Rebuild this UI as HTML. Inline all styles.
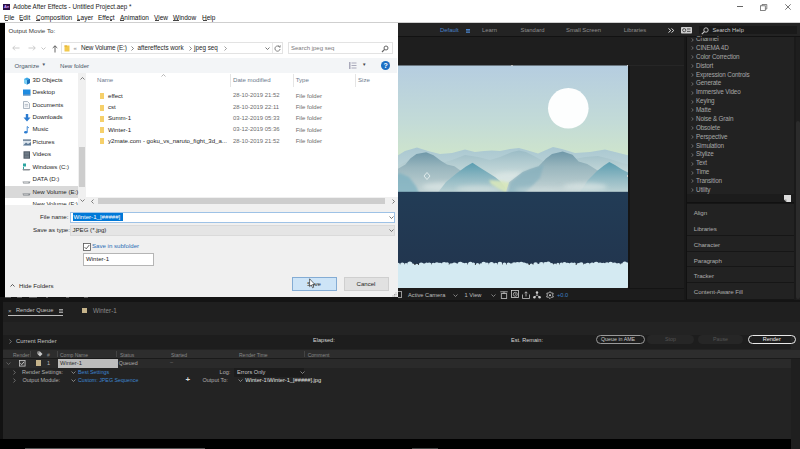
<!DOCTYPE html>
<html><head><meta charset="utf-8">
<style>
*{margin:0;padding:0;box-sizing:border-box}
html,body{width:800px;height:449px;overflow:hidden;background:#1e1e1e;font-family:"Liberation Sans",sans-serif}
.a{position:absolute}
.t{position:absolute;white-space:nowrap;line-height:1}
</style></head><body>
<!-- ===== Title + menu ===== -->
<div class="a" style="left:0;top:0;width:800px;height:23px;background:#fff"></div>
<div class="a" style="left:0;top:22px;width:800px;height:1px;background:#cfcfcf"></div>
<div class="a" style="left:3px;top:4px;width:7px;height:6px;background:#2a0f45"></div>
<div class="t" style="left:4px;top:5px;font-size:4px;color:#d3a0ff;font-weight:bold">Ae</div>
<div class="t" style="left:13px;top:4px;font-size:6.3px;color:#222">Adobe After Effects - Untitled Project.aep *</div>
<div class="t" style="left:4px;top:15.3px;font-size:6.5px;color:#111">
<span class="a" style="left:0">File</span><span class="a" style="left:15px">Edit</span><span class="a" style="left:32px">Composition</span><span class="a" style="left:73px">Layer</span><span class="a" style="left:94px">Effect</span><span class="a" style="left:116px">Animation</span><span class="a" style="left:150px">View</span><span class="a" style="left:169px">Window</span><span class="a" style="left:198px">Help</span>
</div>
<div class="a" style="left:4.5px;top:20.2px;width:3px;height:0.7px;background:#444"></div><div class="a" style="left:19.8px;top:20.2px;width:3.5px;height:0.7px;background:#444"></div><div class="a" style="left:36.2px;top:20.2px;width:4px;height:0.7px;background:#444"></div><div class="a" style="left:77.2px;top:20.2px;width:3.2px;height:0.7px;background:#444"></div><div class="a" style="left:110px;top:20.2px;width:2px;height:0.7px;background:#444"></div><div class="a" style="left:120px;top:20.2px;width:4px;height:0.7px;background:#444"></div><div class="a" style="left:154.6px;top:20.2px;width:4px;height:0.7px;background:#444"></div><div class="a" style="left:173.2px;top:20.2px;width:6px;height:0.7px;background:#444"></div><div class="a" style="left:202.6px;top:20.2px;width:4px;height:0.7px;background:#444"></div>
<!-- window controls -->
<div class="a" style="left:737px;top:6px;width:5.5px;height:1px;background:#666"></div>
<svg class="a" style="left:760px;top:3.5px" width="8" height="7" viewBox="0 0 8 7"><rect x="0.5" y="1.8" width="4.8" height="4.7" fill="none" stroke="#666" stroke-width="0.8"/><path d="M2,1.8 L2,0.5 L6.8,0.5 L6.8,5 L5.3,5" fill="none" stroke="#666" stroke-width="0.8"/></svg>
<svg class="a" style="left:785px;top:3.8px" width="6" height="6" viewBox="0 0 6 6"><path d="M0.3,0.3 L5.7,5.7 M5.7,0.3 L0.3,5.7" stroke="#555" stroke-width="0.8"/></svg>
<!-- dialog bottom blips -->
<!-- ===== AE workspace bar ===== -->
<div class="a" style="left:398px;top:23px;width:402px;height:13px;background:#232323"></div>
<div class="a" style="left:398px;top:36px;width:402px;height:1px;background:#121212"></div>
<div class="t" style="left:440px;top:27.7px;font-size:5.9px;color:#4a82c8">Default</div>
<div class="a" style="left:466px;top:28.6px;width:3.5px;height:0.8px;background:#4a82c8;box-shadow:0 1.4px 0 #4a82c8,0 2.8px 0 #4a82c8"></div>
<div class="t" style="left:482px;top:27.5px;font-size:5.9px;color:#8e8e8e">Learn</div>
<div class="t" style="left:520.5px;top:27.5px;font-size:5.9px;color:#8e8e8e">Standard</div>
<div class="t" style="left:566px;top:27.5px;font-size:5.9px;color:#8e8e8e">Small Screen</div>
<div class="t" style="left:623.7px;top:27.5px;font-size:5.9px;color:#8e8e8e">Libraries</div>
<svg class="a" style="left:668px;top:27.5px" width="7" height="5" viewBox="0 0 7 5"><path d="M0.5,0.5 L2.8,2.5 L0.5,4.5 M3.5,0.5 L5.8,2.5 L3.5,4.5" fill="none" stroke="#d8d8d8" stroke-width="1"/></svg>
<svg class="a" style="left:681px;top:27px" width="11" height="6.5" viewBox="0 0 11 6.5"><rect x="0" y="0" width="11" height="6.5" rx="0.8" fill="#cfcfcf"/><circle cx="3.2" cy="3.2" r="1.6" fill="none" stroke="#333" stroke-width="0.8"/><rect x="6" y="1.6" width="3.5" height="0.8" fill="#333"/><rect x="6" y="3.9" width="3.5" height="0.8" fill="#333"/></svg>
<div class="a" style="left:698.5px;top:26px;width:98.5px;height:8px;background:#1a1a1a"></div>
<svg class="a" style="left:700.5px;top:26.5px" width="8" height="8" viewBox="0 0 8 8"><circle cx="5" cy="3" r="2.2" fill="none" stroke="#cfcfcf" stroke-width="0.9"/><line x1="3.4" y1="4.6" x2="0.8" y2="7.2" stroke="#cfcfcf" stroke-width="1.1"/></svg>
<div class="t" style="left:712.5px;top:27.5px;font-size:5.7px;color:#c8c8c8">Search Help</div>

<!-- ===== Comp panel ===== -->
<div class="a" style="left:398px;top:37px;width:288px;height:263px;background:#1e1e1e"></div>
<svg class="a" style="left:398px;top:65px" width="230" height="223" viewBox="398 65 230 223">
<defs>
<linearGradient id="sky" x1="0" y1="0" x2="0" y2="1"><stop offset="0" stop-color="#b5cde0"/><stop offset="0.45" stop-color="#c3dbd7"/><stop offset="0.78" stop-color="#d1e7c9"/><stop offset="1" stop-color="#d7ebc3"/></linearGradient>
<linearGradient id="la" x1="0" y1="0" x2="0" y2="1"><stop offset="0" stop-color="#a9c7d1"/><stop offset="1" stop-color="#d3e3de"/></linearGradient>
<linearGradient id="lb" x1="0" y1="0" x2="0" y2="1"><stop offset="0" stop-color="#9bbcc6"/><stop offset="0.55" stop-color="#c9dbdb"/><stop offset="1" stop-color="#dae6e3"/></linearGradient>
<linearGradient id="lc" x1="0" y1="0" x2="0" y2="1"><stop offset="0" stop-color="#6f98a8"/><stop offset="0.35" stop-color="#99b6be"/><stop offset="0.75" stop-color="#b6cacd"/><stop offset="1" stop-color="#c5d5d6"/></linearGradient>
<linearGradient id="ld" x1="0" y1="0" x2="0" y2="1"><stop offset="0" stop-color="#5b9db0"/><stop offset="0.5" stop-color="#92bac4"/><stop offset="1" stop-color="#c2d5d6"/></linearGradient>
<linearGradient id="wt" x1="0" y1="0" x2="0" y2="1"><stop offset="0" stop-color="#223c56"/><stop offset="1" stop-color="#22364f"/></linearGradient>
<filter id="bl" x="-5%" y="-5%" width="110%" height="110%"><feGaussianBlur stdDeviation="0.55"/></filter>
<filter id="bm" x="-30%" y="-80%" width="160%" height="260%"><feGaussianBlur stdDeviation="2.2"/></filter>
<filter id="bs" x="-20%" y="-20%" width="140%" height="140%"><feGaussianBlur stdDeviation="1.2"/></filter>
<clipPath id="cl"><rect x="398" y="65.5" width="230" height="126.5"/></clipPath>
</defs>
<rect x="398" y="65.5" width="230" height="127" fill="url(#sky)"/>
<circle cx="568.3" cy="108.3" r="20.3" fill="#fdfefe"/>
<g clip-path="url(#cl)"><g filter="url(#bl)">
<path d="M390,160 L405,151 L417,147.5 L428,151 L440,154 L452,153 L465,149.5 L475,152 L484,151 L492,150.5 L500,151 L510,149 L519,148 L528,150.5 L538,153.5 L546,150 L553,147 L562,149 L575,153 L590,152 L605,149.5 L615,152 L635,157 L635,195 L390,195 Z" fill="url(#la)"/>
<path d="M390,172 L400,165 L410,160 L420,158 L430,160 L442,163 L452,160 L465,155 L478,157 L490,160 L500,157 L512,152 L519,150.5 L526,152 L534,156 L545,162 L556,166 L570,160 L585,157 L598,156 L610,159 L622,163 L635,166 L635,195 L390,195 Z" fill="url(#lb)"/>
<ellipse cx="512" cy="180" rx="22" ry="8" fill="#dce7e5" opacity="0.8" filter="url(#bm)"/>
<path d="M390,170 L398,168.8 L405.4,164.5 L410.3,158.4 L416.4,154 L426.2,152.3 L433.5,155.3 L440.9,160.8 L447,164.5 L454.4,166.3 L460.5,170.6 L475,177 L492,184 L505,190 L512,195 L390,195 Z" fill="url(#lc)"/>
<path d="M390,178 L400,173 L409,177 L416,186 L420,195 L390,195 Z" fill="#7db1c1" opacity="0.75" filter="url(#bs)"/>
<ellipse cx="448" cy="187" rx="26" ry="4.5" fill="#dbe6e5" opacity="0.75" filter="url(#bm)"/>
<path d="M457,173 L466,166.5 L472.5,162.7 L479,167 L487,172 L495,177 L500,181 L505,187 L507,195 L436,195 L446,182 Z" fill="url(#ld)"/>
<ellipse cx="478" cy="189" rx="22" ry="3.5" fill="#d3e0df" opacity="0.7" filter="url(#bm)"/>
<path d="M489,180 L502,181 L515,184 L527,188 L538,192 L538,195 L510,195 L499,189 L491,184 Z" fill="#d8e7bb" opacity="0.9" filter="url(#bs)"/>
<path d="M505,195 L509.2,182.3 L516,177 L522.7,171.9 L530,169 L538.6,166.3 L546,158.4 L552,154 L562.7,151.6 L572.5,154.7 L578.6,161.4 L587.2,163.9 L597,170 L606,176 L618,181 L635,184 L635,195 Z" fill="url(#lc)"/>
<path d="M507,195 L510,182.5 L517,177 L523,172 L531,169 L538.6,166.5 L544,164 L540,178 L528,190 L522,195 Z" fill="#80aebd" opacity="0.6" filter="url(#bs)"/>
<path d="M597,171 L604,165.5 L609.3,162 L615,165 L622,169.5 L635,176 L635,195 L578,195 L588,180 Z" fill="url(#ld)"/>
<ellipse cx="585" cy="187" rx="22" ry="4" fill="#dbe6e5" opacity="0.7" filter="url(#bm)"/>
<ellipse cx="545" cy="190" rx="30" ry="3" fill="#d0dddd" opacity="0.6" filter="url(#bm)"/>
</g></g>
<rect x="398" y="191.8" width="230" height="72" fill="url(#wt)"/>
<rect x="398" y="265" width="230" height="23" fill="#d4eaf2"/>
<g fill="#d4eaf2"><circle cx="398.0" cy="264.8" r="2.1"/><circle cx="402.3" cy="264.8" r="2.2"/><circle cx="406.0" cy="264.8" r="1.8"/><circle cx="409.8" cy="264.1" r="2.6"/><circle cx="412.9" cy="265.2" r="1.7"/><circle cx="416.8" cy="265.5" r="1.7"/><circle cx="421.2" cy="264.9" r="2.4"/><circle cx="424.0" cy="264.8" r="1.6"/><circle cx="426.6" cy="264.4" r="1.8"/><circle cx="429.2" cy="264.7" r="2.2"/><circle cx="433.4" cy="265.0" r="2.2"/><circle cx="436.9" cy="264.7" r="2.4"/><circle cx="439.9" cy="265.5" r="2.8"/><circle cx="444.1" cy="264.5" r="2.4"/><circle cx="447.1" cy="264.1" r="1.9"/><circle cx="451.1" cy="265.3" r="2.1"/><circle cx="454.4" cy="265.3" r="2.7"/><circle cx="456.9" cy="265.4" r="1.9"/><circle cx="460.3" cy="264.6" r="2.8"/><circle cx="463.0" cy="265.2" r="2.4"/><circle cx="466.0" cy="264.5" r="1.7"/><circle cx="470.4" cy="264.2" r="2.5"/><circle cx="473.4" cy="264.1" r="1.7"/><circle cx="477.5" cy="264.8" r="1.8"/><circle cx="480.9" cy="265.1" r="1.8"/><circle cx="483.7" cy="264.2" r="2.4"/><circle cx="487.0" cy="264.4" r="1.9"/><circle cx="491.5" cy="264.5" r="2.6"/><circle cx="495.7" cy="264.6" r="1.9"/><circle cx="499.9" cy="264.2" r="2.4"/><circle cx="504.4" cy="264.4" r="1.9"/><circle cx="508.5" cy="264.4" r="2.0"/><circle cx="511.1" cy="264.9" r="1.7"/><circle cx="514.1" cy="264.6" r="2.3"/><circle cx="517.5" cy="264.7" r="2.8"/><circle cx="521.2" cy="264.3" r="2.6"/><circle cx="524.0" cy="265.2" r="2.7"/><circle cx="527.0" cy="265.1" r="1.8"/><circle cx="531.3" cy="265.4" r="1.8"/><circle cx="535.6" cy="264.6" r="2.3"/><circle cx="538.3" cy="265.4" r="1.6"/><circle cx="541.3" cy="264.4" r="2.4"/><circle cx="545.4" cy="264.4" r="2.3"/><circle cx="548.3" cy="264.1" r="2.5"/><circle cx="551.3" cy="265.3" r="2.3"/><circle cx="555.0" cy="265.4" r="1.9"/><circle cx="557.9" cy="264.4" r="1.6"/><circle cx="561.3" cy="264.3" r="1.7"/><circle cx="564.5" cy="264.2" r="2.3"/><circle cx="567.7" cy="265.5" r="2.7"/><circle cx="571.6" cy="264.9" r="2.4"/><circle cx="574.3" cy="264.0" r="1.6"/><circle cx="578.7" cy="265.4" r="2.4"/><circle cx="581.2" cy="264.7" r="2.4"/><circle cx="585.2" cy="265.5" r="2.0"/><circle cx="587.8" cy="265.1" r="2.3"/><circle cx="592.1" cy="265.1" r="2.5"/><circle cx="596.2" cy="264.5" r="2.7"/><circle cx="600.1" cy="265.3" r="2.7"/><circle cx="603.4" cy="265.3" r="2.5"/><circle cx="607.0" cy="264.6" r="2.3"/><circle cx="610.7" cy="264.1" r="2.3"/><circle cx="614.5" cy="265.3" r="2.8"/><circle cx="618.4" cy="265.1" r="2.1"/><circle cx="622.1" cy="265.3" r="2.1"/><circle cx="624.8" cy="264.0" r="2.5"/><circle cx="628.5" cy="264.3" r="2.2"/></g>
<path d="M427,172.5 L424,176 L427,179.5 L430,176 Z" fill="none" stroke="#eef4f4" stroke-width="0.8"/>
</svg>
<div class="a" style="left:398px;top:288px;width:286px;height:12px;background:#1c1c1c"></div><div class="a" style="left:628px;top:288px;width:56px;height:1px;background:#141414"></div><div class="a" style="left:398px;top:291px;width:4px;height:7px;border:0.8px solid #999;border-left:none"></div><div class="a" style="left:628px;top:65px;width:57px;height:1px;background:#262626"></div><div class="a" style="left:628px;top:66px;width:2px;height:222px;background:#151515"></div><div class="a" style="left:684px;top:37px;width:2px;height:263px;background:#181818"></div>
<div class="t" style="left:408px;top:293px;font-size:5.7px;color:#bcbcbc">Active Camera</div>
<svg class="a" style="left:453.0px;top:293.7px" width="5" height="3" viewBox="0 0 5 3"><path d="M0.5,0.5 L2.5,2.5 L4.5,0.5" fill="none" stroke="#aaa" stroke-width="0.7"/></svg>
<div class="t" style="left:464.5px;top:293px;font-size:5.7px;color:#bcbcbc">1 View</div>
<svg class="a" style="left:490.5px;top:293.7px" width="5" height="3" viewBox="0 0 5 3"><path d="M0.5,0.5 L2.5,2.5 L4.5,0.5" fill="none" stroke="#aaa" stroke-width="0.7"/></svg>
<svg class="a" style="left:499.5px;top:290.5px" width="8" height="8" viewBox="0 0 8 8"><path d="M0.3,0.8 L7.7,0.8" stroke="#c8c8c8" stroke-width="0.8"/><rect x="1.3" y="2.6" width="5.4" height="4.8" fill="none" stroke="#c8c8c8" stroke-width="0.8"/><path d="M4,0.8 L4,2.6" stroke="#c8c8c8" stroke-width="0.8"/></svg>
<svg class="a" style="left:510.5px;top:290.3px" width="8" height="8" viewBox="0 0 8 8"><rect x="0.5" y="0.5" width="7" height="7" fill="none" stroke="#d0d0d0" stroke-width="0.8"/><circle cx="4.3" cy="4.3" r="2" fill="none" stroke="#d0d0d0" stroke-width="0.7"/><path d="M4.3,3.2 L4.3,4.4 L5.3,4.4" stroke="#d0d0d0" stroke-width="0.6" fill="none"/></svg>
<svg class="a" style="left:522px;top:290.5px" width="8" height="8" viewBox="0 0 8 8"><path d="M0.5,3.5 L0.5,7.5 L7.5,7.5 L7.5,3.5" fill="none" stroke="#c8c8c8" stroke-width="0.8"/><path d="M4,5.5 L4,0.8 M2.5,2.3 L4,0.8 L5.5,2.3" fill="none" stroke="#c8c8c8" stroke-width="0.8"/></svg>
<svg class="a" style="left:533px;top:290.5px" width="8" height="8" viewBox="0 0 8 8"><circle cx="4" cy="1.5" r="1.2" fill="#cfcfcf"/><circle cx="1.4" cy="6.3" r="1.2" fill="#cfcfcf"/><circle cx="6.6" cy="6.3" r="1.2" fill="#cfcfcf"/><path d="M4,1.5 L4,4 L1.4,6.3 M4,4 L6.6,6.3" fill="none" stroke="#cfcfcf" stroke-width="0.7"/></svg>
<svg class="a" style="left:545.5px;top:290.5px" width="8" height="8" viewBox="0 0 8 8"><path d="M4,0.6 L5.2,2 L7.2,2.2 L6.6,4.2 L7.4,6 L5.3,6.3 L4,7.6 L2.7,6.3 L0.6,6 L1.4,4.2 L0.8,2.2 L2.8,2 Z" fill="none" stroke="#cfcfcf" stroke-width="0.8"/><circle cx="4" cy="4.2" r="1" fill="#cfcfcf"/></svg>
<div class="t" style="left:557px;top:293px;font-size:5.7px;color:#3d7fc4">+0.0</div>

<!-- ===== Effects panel ===== -->
<div class="a" style="left:686px;top:37px;width:1px;height:263px;background:#111"></div>
<div class="a" style="left:687px;top:37px;width:107px;height:157px;background:#222"></div>
<div class="a" style="left:794px;top:37px;width:1.5px;height:263px;background:#1a1a1a"></div><div class="a" style="left:795.5px;top:37px;width:4.5px;height:263px;background:#1e1e1e"></div>
<div class="a" style="left:795.5px;top:121px;width:4.5px;height:178px;background:#2b2b2b;border-radius:2px"></div>
<svg class="a" style="left:690.5px;top:37.50px" width="3" height="4" viewBox="0 0 3 4"><path d="M0.5,0.3 L2.3,2 L0.5,3.7" fill="none" stroke="#8c8c8c" stroke-width="0.7"/></svg><div class="t" style="left:696px;top:36.10px;font-size:6.3px;letter-spacing:-0.15px;color:#a8a8a8">Channel</div>
<svg class="a" style="left:690.5px;top:46.37px" width="3" height="4" viewBox="0 0 3 4"><path d="M0.5,0.3 L2.3,2 L0.5,3.7" fill="none" stroke="#8c8c8c" stroke-width="0.7"/></svg><div class="t" style="left:696px;top:44.97px;font-size:6.3px;letter-spacing:-0.15px;color:#a8a8a8">CINEMA 4D</div>
<svg class="a" style="left:690.5px;top:55.24px" width="3" height="4" viewBox="0 0 3 4"><path d="M0.5,0.3 L2.3,2 L0.5,3.7" fill="none" stroke="#8c8c8c" stroke-width="0.7"/></svg><div class="t" style="left:696px;top:53.84px;font-size:6.3px;letter-spacing:-0.15px;color:#a8a8a8">Color Correction</div>
<svg class="a" style="left:690.5px;top:64.11px" width="3" height="4" viewBox="0 0 3 4"><path d="M0.5,0.3 L2.3,2 L0.5,3.7" fill="none" stroke="#8c8c8c" stroke-width="0.7"/></svg><div class="t" style="left:696px;top:62.71px;font-size:6.3px;letter-spacing:-0.15px;color:#a8a8a8">Distort</div>
<svg class="a" style="left:690.5px;top:72.98px" width="3" height="4" viewBox="0 0 3 4"><path d="M0.5,0.3 L2.3,2 L0.5,3.7" fill="none" stroke="#8c8c8c" stroke-width="0.7"/></svg><div class="t" style="left:696px;top:71.58px;font-size:6.3px;letter-spacing:-0.15px;color:#a8a8a8">Expression Controls</div>
<svg class="a" style="left:690.5px;top:81.85px" width="3" height="4" viewBox="0 0 3 4"><path d="M0.5,0.3 L2.3,2 L0.5,3.7" fill="none" stroke="#8c8c8c" stroke-width="0.7"/></svg><div class="t" style="left:696px;top:80.45px;font-size:6.3px;letter-spacing:-0.15px;color:#a8a8a8">Generate</div>
<svg class="a" style="left:690.5px;top:90.72px" width="3" height="4" viewBox="0 0 3 4"><path d="M0.5,0.3 L2.3,2 L0.5,3.7" fill="none" stroke="#8c8c8c" stroke-width="0.7"/></svg><div class="t" style="left:696px;top:89.32px;font-size:6.3px;letter-spacing:-0.15px;color:#a8a8a8">Immersive Video</div>
<svg class="a" style="left:690.5px;top:99.59px" width="3" height="4" viewBox="0 0 3 4"><path d="M0.5,0.3 L2.3,2 L0.5,3.7" fill="none" stroke="#8c8c8c" stroke-width="0.7"/></svg><div class="t" style="left:696px;top:98.19px;font-size:6.3px;letter-spacing:-0.15px;color:#a8a8a8">Keying</div>
<svg class="a" style="left:690.5px;top:108.46px" width="3" height="4" viewBox="0 0 3 4"><path d="M0.5,0.3 L2.3,2 L0.5,3.7" fill="none" stroke="#8c8c8c" stroke-width="0.7"/></svg><div class="t" style="left:696px;top:107.06px;font-size:6.3px;letter-spacing:-0.15px;color:#a8a8a8">Matte</div>
<svg class="a" style="left:690.5px;top:117.33px" width="3" height="4" viewBox="0 0 3 4"><path d="M0.5,0.3 L2.3,2 L0.5,3.7" fill="none" stroke="#8c8c8c" stroke-width="0.7"/></svg><div class="t" style="left:696px;top:115.93px;font-size:6.3px;letter-spacing:-0.15px;color:#a8a8a8">Noise &amp; Grain</div>
<svg class="a" style="left:690.5px;top:126.20px" width="3" height="4" viewBox="0 0 3 4"><path d="M0.5,0.3 L2.3,2 L0.5,3.7" fill="none" stroke="#8c8c8c" stroke-width="0.7"/></svg><div class="t" style="left:696px;top:124.80px;font-size:6.3px;letter-spacing:-0.15px;color:#a8a8a8">Obsolete</div>
<svg class="a" style="left:690.5px;top:135.07px" width="3" height="4" viewBox="0 0 3 4"><path d="M0.5,0.3 L2.3,2 L0.5,3.7" fill="none" stroke="#8c8c8c" stroke-width="0.7"/></svg><div class="t" style="left:696px;top:133.67px;font-size:6.3px;letter-spacing:-0.15px;color:#a8a8a8">Perspective</div>
<svg class="a" style="left:690.5px;top:143.94px" width="3" height="4" viewBox="0 0 3 4"><path d="M0.5,0.3 L2.3,2 L0.5,3.7" fill="none" stroke="#8c8c8c" stroke-width="0.7"/></svg><div class="t" style="left:696px;top:142.54px;font-size:6.3px;letter-spacing:-0.15px;color:#a8a8a8">Simulation</div>
<svg class="a" style="left:690.5px;top:152.81px" width="3" height="4" viewBox="0 0 3 4"><path d="M0.5,0.3 L2.3,2 L0.5,3.7" fill="none" stroke="#8c8c8c" stroke-width="0.7"/></svg><div class="t" style="left:696px;top:151.41px;font-size:6.3px;letter-spacing:-0.15px;color:#a8a8a8">Stylize</div>
<svg class="a" style="left:690.5px;top:161.68px" width="3" height="4" viewBox="0 0 3 4"><path d="M0.5,0.3 L2.3,2 L0.5,3.7" fill="none" stroke="#8c8c8c" stroke-width="0.7"/></svg><div class="t" style="left:696px;top:160.28px;font-size:6.3px;letter-spacing:-0.15px;color:#a8a8a8">Text</div>
<svg class="a" style="left:690.5px;top:170.55px" width="3" height="4" viewBox="0 0 3 4"><path d="M0.5,0.3 L2.3,2 L0.5,3.7" fill="none" stroke="#8c8c8c" stroke-width="0.7"/></svg><div class="t" style="left:696px;top:169.15px;font-size:6.3px;letter-spacing:-0.15px;color:#a8a8a8">Time</div>
<svg class="a" style="left:690.5px;top:179.42px" width="3" height="4" viewBox="0 0 3 4"><path d="M0.5,0.3 L2.3,2 L0.5,3.7" fill="none" stroke="#8c8c8c" stroke-width="0.7"/></svg><div class="t" style="left:696px;top:178.02px;font-size:6.3px;letter-spacing:-0.15px;color:#a8a8a8">Transition</div>
<svg class="a" style="left:690.5px;top:188.29px" width="3" height="4" viewBox="0 0 3 4"><path d="M0.5,0.3 L2.3,2 L0.5,3.7" fill="none" stroke="#8c8c8c" stroke-width="0.7"/></svg><div class="t" style="left:696px;top:186.89px;font-size:6.3px;letter-spacing:-0.15px;color:#a8a8a8">Utility</div>
<div class="a" style="left:687px;top:37px;width:107px;height:0.8px;background:#222"></div>
<div class="a" style="left:687px;top:193.5px;width:107px;height:106.5px;background:#161616"></div>
<div class="a" style="left:687px;top:194px;width:107px;height:8.5px;background:#1c1c1c"></div>
<svg class="a" style="left:784.3px;top:195px" width="7" height="7" viewBox="0 0 7 7"><path d="M0,0 L7,0 L7,7 L2.5,7 L0,4.5 Z" fill="#dcdcdc"/><path d="M0,4.5 L2.5,4.5 L2.5,7" fill="#9a9a9a"/></svg>
<div class="a" style="left:687px;top:202px;width:107px;height:1px;background:#111"></div>
<div class="a" style="left:687px;top:203.5px;width:107px;height:16.5px;background:#222"></div>
<div class="t" style="left:693.8px;top:210.3px;font-size:6.2px;letter-spacing:-0.1px;color:#acacac">Align</div>
<div class="a" style="left:687px;top:220.0px;width:107px;height:15.0px;background:#222"></div>
<div class="t" style="left:693.8px;top:225.9px;font-size:6.2px;letter-spacing:-0.1px;color:#acacac">Libraries</div>
<div class="a" style="left:687px;top:236.0px;width:107px;height:14.5px;background:#222"></div>
<div class="t" style="left:693.8px;top:242.0px;font-size:6.2px;letter-spacing:-0.1px;color:#acacac">Character</div>
<div class="a" style="left:687px;top:251.5px;width:107px;height:14.7px;background:#222"></div>
<div class="t" style="left:693.8px;top:257.5px;font-size:6.2px;letter-spacing:-0.1px;color:#acacac">Paragraph</div>
<div class="a" style="left:687px;top:267.2px;width:107px;height:14.8px;background:#222"></div>
<div class="t" style="left:693.8px;top:273.2px;font-size:6.2px;letter-spacing:-0.1px;color:#acacac">Tracker</div>
<div class="a" style="left:687px;top:283.0px;width:107px;height:16.0px;background:#222"></div>
<div class="t" style="left:693.8px;top:288.9px;font-size:6.2px;letter-spacing:-0.1px;color:#acacac">Content-Aware Fill</div>

<!-- ===== Render queue ===== -->
<div class="a" style="left:0;top:300px;width:800px;height:2px;background:#141414"></div>
<div class="a" style="left:0;top:302px;width:800px;height:20px;background:#1f1f1f"></div>
<div class="t" style="left:8px;top:307.5px;font-size:6px;color:#aaa">&#x00D7;</div>
<div class="t" style="left:16px;top:307.5px;font-size:5.7px;color:#c4c4c4">Render Queue</div>
<div class="a" style="left:58.5px;top:309.2px;width:4px;height:0.8px;background:#999;box-shadow:0 1.5px 0 #999,0 3px 0 #999"></div>
<div class="a" style="left:8px;top:315px;width:55px;height:1px;background:#bdbdbd"></div>
<div class="a" style="left:82px;top:308px;width:5px;height:5px;background:#c5b38a"></div>
<div class="t" style="left:93px;top:307.5px;font-size:6.3px;color:#8a8a8a">Winter-1</div>
<div class="a" style="left:0;top:322px;width:800px;height:117px;background:#232323"></div>
<div class="a" style="left:0;top:335px;width:791px;height:14px;background:#1d1d1d"></div>
<svg class="a" style="left:9px;top:339px" width="3" height="5" viewBox="0 0 3 5"><path d="M0.5,0.5 L2.3,2.5 L0.5,4.5" fill="none" stroke="#999" stroke-width="0.7"/></svg>
<div class="t" style="left:16px;top:338.8px;font-size:5.9px;color:#c0c0c0">Current Render</div>
<div class="t" style="left:313px;top:338px;font-size:5.6px;color:#d8d8d8">Elapsed:</div>
<div class="t" style="left:511px;top:338px;font-size:5.6px;color:#d8d8d8">Est. Remain:</div>
<div class="a" style="left:596px;top:334.6px;width:48.7px;height:9.4px;border:1px solid #9a9a9a;border-radius:5px"></div>
<div class="t" style="left:601px;top:337px;font-size:5.3px;color:#c8c8c8">Queue in AME</div>
<div class="a" style="left:647px;top:334.6px;width:46.6px;height:9.4px;background:#262626;border-radius:5px"></div>
<div class="t" style="left:665px;top:337px;font-size:5.3px;color:#555">Stop</div>
<div class="a" style="left:698px;top:334.6px;width:45px;height:9.4px;background:#262626;border-radius:5px"></div>
<div class="t" style="left:713px;top:337px;font-size:5.3px;color:#555">Pause</div>
<div class="a" style="left:747.7px;top:334.6px;width:48.6px;height:9.4px;border:1px solid #e8e8e8;border-radius:5px"></div>
<div class="t" style="left:762.7px;top:337px;font-size:5.5px;color:#eee">Render</div>
<div class="a" style="left:0;top:349.5px;width:800px;height:8px;background:#2d2d2d"></div>
<div class="a" style="left:0;top:357.5px;width:800px;height:1.2px;background:#1a1a1a"></div>
<div class="a" style="left:0;top:359px;width:791px;height:8.5px;background:#2a2a2a"></div>
<div class="a" style="left:791px;top:358.7px;width:9px;height:90.3px;background:#1f1f1f"></div>
<div class="t" style="left:13px;top:352.8px;font-size:5px;color:#888">Render</div>
<div class="a" style="left:30px;top:351px;width:1px;height:6px;background:#444"></div>
<svg class="a" style="left:37px;top:350.5px" width="6" height="6" viewBox="0 0 6 6"><path d="M0.5,0.5 L3,0.5 L5.5,3 L3,5.5 L0.5,3 Z" fill="#c8c8c8"/><circle cx="1.8" cy="1.8" r="0.6" fill="#2e2e2e"/></svg>
<div class="t" style="left:47px;top:352.8px;font-size:5px;color:#888">#</div>
<div class="a" style="left:57px;top:351px;width:1px;height:6px;background:#444"></div>
<div class="t" style="left:60px;top:352.8px;font-size:5px;color:#888">Comp Name</div>
<div class="a" style="left:115.6px;top:351px;width:1px;height:6px;background:#444"></div>
<div class="t" style="left:120px;top:352.8px;font-size:5px;color:#888">Status</div>
<div class="t" style="left:171px;top:352.8px;font-size:5px;color:#888">Started</div>
<div class="t" style="left:239px;top:352.8px;font-size:5px;color:#888">Render Time</div>
<div class="a" style="left:304px;top:351px;width:1px;height:6px;background:#444"></div>
<div class="t" style="left:307.7px;top:352.8px;font-size:5px;color:#888">Comment</div>
<svg class="a" style="left:5.5px;top:362px" width="5" height="3" viewBox="0 0 5 3"><path d="M0.5,0.5 L2.5,2.5 L4.5,0.5" fill="none" stroke="#777" stroke-width="0.7"/></svg>
<svg class="a" style="left:19px;top:360px" width="6.5" height="6.5" viewBox="0 0 6.5 6.5"><rect x="0.4" y="0.4" width="5.7" height="5.7" fill="#3a3a3a" stroke="#c8c8c8" stroke-width="0.8"/><path d="M1.4,3.3 L2.7,4.6 L5.1,1.8" fill="none" stroke="#e0e0e0" stroke-width="0.8"/></svg>
<div class="a" style="left:36px;top:360px;width:5px;height:5.5px;background:#c5b38a"></div>
<div class="t" style="left:47px;top:360.5px;font-size:5.5px;color:#bbb">1</div>
<div class="a" style="left:57.5px;top:359px;width:60px;height:8.5px;background:#bdbdbd"></div>
<div class="t" style="left:60px;top:361.2px;font-size:5.8px;color:#2a2a2a">Winter-1</div>
<div class="t" style="left:118.8px;top:360.5px;font-size:5.3px;color:#aaa">Queued</div>
<div class="t" style="left:170px;top:360px;font-size:5.5px;color:#777">&#x2013;</div>
<svg class="a" style="left:13px;top:370px" width="3" height="5" viewBox="0 0 3 5"><path d="M0.5,0.5 L2.3,2.5 L0.5,4.5" fill="none" stroke="#8a8a8a" stroke-width="0.7"/></svg>
<div class="t" style="left:22px;top:370.1px;font-size:5.5px;color:#b0b0b0">Render Settings:</div>
<svg class="a" style="left:71.0px;top:371.2px" width="5" height="3" viewBox="0 0 5 3"><path d="M0.5,0.5 L2.5,2.5 L4.5,0.5" fill="none" stroke="#aaa" stroke-width="0.7"/></svg>
<div class="t" style="left:78px;top:370.1px;font-size:5.3px;color:#3d85d0">Best Settings</div>
<div class="t" style="left:219.6px;top:370.1px;font-size:5.5px;color:#b0b0b0">Log:</div>
<div class="a" style="left:234px;top:367.5px;width:70.4px;height:9px;background:#1c1c1c"></div>
<div class="t" style="left:237px;top:370.1px;font-size:5.6px;color:#c8c8c8">Errors Only</div>
<svg class="a" style="left:299.5px;top:371.2px" width="5" height="3" viewBox="0 0 5 3"><path d="M0.5,0.5 L2.5,2.5 L4.5,0.5" fill="none" stroke="#aaa" stroke-width="0.7"/></svg>
<svg class="a" style="left:13px;top:378px" width="3" height="5" viewBox="0 0 3 5"><path d="M0.5,0.5 L2.3,2.5 L0.5,4.5" fill="none" stroke="#8a8a8a" stroke-width="0.7"/></svg>
<div class="t" style="left:22.5px;top:377.8px;font-size:5.5px;color:#b0b0b0">Output Module:</div>
<svg class="a" style="left:71.0px;top:378.7px" width="5" height="3" viewBox="0 0 5 3"><path d="M0.5,0.5 L2.5,2.5 L4.5,0.5" fill="none" stroke="#aaa" stroke-width="0.7"/></svg>
<div class="t" style="left:78px;top:377.8px;font-size:5.3px;color:#3d85d0">Custom: JPEG Sequence</div>
<div class="t" style="left:185.5px;top:375.5px;font-size:8px;color:#ddd;font-weight:bold">+</div>
<div class="t" style="left:202.5px;top:377.8px;font-size:5.5px;color:#b0b0b0">Output To:</div>
<svg class="a" style="left:237.5px;top:378.7px" width="5" height="3" viewBox="0 0 5 3"><path d="M0.5,0.5 L2.5,2.5 L4.5,0.5" fill="none" stroke="#aaa" stroke-width="0.7"/></svg>
<div class="t" style="left:245.3px;top:377.8px;font-size:5.7px;color:#e0e0e0">Winter-1\Winter-1_[#####].jpg</div>
<div class="a" style="left:0;top:300px;width:2.5px;height:139px;background:#121212"></div>
<div class="a" style="left:0;top:439px;width:791px;height:10px;background:#000"></div>
<div class="a" style="left:25px;top:447.5px;width:180px;height:1px;background:#555"></div><div class="a" style="left:412px;top:447.5px;width:26px;height:1px;background:#444"></div>
<div class="a" style="left:0;top:297px;width:398px;height:3px;background:#151515"></div><div class="a" style="left:5px;top:297px;width:6px;height:1.2px;background:#5a5a5a"></div><div class="a" style="left:17px;top:297px;width:5px;height:1.2px;background:#5a5a5a"></div><div class="a" style="left:29px;top:297px;width:8px;height:1.2px;background:#5a5a5a"></div><div class="a" style="left:46px;top:297px;width:2px;height:1.2px;background:#5a5a5a"></div><div class="a" style="left:66px;top:297px;width:3px;height:1.2px;background:#5a5a5a"></div><div class="a" style="left:84px;top:297px;width:4px;height:1.2px;background:#5a5a5a"></div>
<div class="a" style="left:397px;top:23px;width:1px;height:274px;background:#a9b0b2"></div>
<div class="a" style="left:626.5px;top:64.5px;width:1.8px;height:1.8px;background:#d8d8d8"></div>
<div class="a" style="left:626.5px;top:175px;width:1.8px;height:1.8px;background:#d8d8d8"></div>
<div class="a" style="left:626.5px;top:286.5px;width:1.8px;height:1.8px;background:#ccc"></div>
<div class="a" style="left:510.5px;top:64.5px;width:2.5px;height:1.5px;background:#bbb"></div>
<!-- ===== left black strip ===== -->
<div class="a" style="left:0;top:23px;width:5px;height:274px;background:#000"></div>

<!-- ===== Dialog ===== -->
<div class="a" style="left:5px;top:23px;width:393px;height:274px;background:#fff"></div>
<div class="t" style="left:8.5px;top:28px;font-size:6.2px;color:#3a3a3a">Output Movie To:</div>
<!-- nav arrows -->
<svg class="a" style="left:11.5px;top:45px" width="8" height="6" viewBox="0 0 8 6"><path d="M7.5,3 L0.8,3 M3,0.7 L0.8,3 L3,5.3" fill="none" stroke="#c6c6c6" stroke-width="0.9"/></svg>
<svg class="a" style="left:27.5px;top:45px" width="8" height="6" viewBox="0 0 8 6"><path d="M0.5,3 L7.2,3 M5,0.7 L7.2,3 L5,5.3" fill="none" stroke="#c6c6c6" stroke-width="0.9"/></svg>
<svg class="a" style="left:40.5px;top:46.5px" width="5" height="3" viewBox="0 0 5 3"><path d="M0.5,0.5 L2.5,2.5 L4.5,0.5" fill="none" stroke="#b5b5b5" stroke-width="0.8"/></svg>
<svg class="a" style="left:51.5px;top:44.5px" width="6" height="8" viewBox="0 0 6 8"><path d="M3,7.5 L3,0.8 M0.7,3 L3,0.8 L5.3,3" fill="none" stroke="#555" stroke-width="0.9"/></svg>
<!-- address box -->
<div class="a" style="left:60.5px;top:42px;width:222.5px;height:12px;border:1px solid #e3e3e3;background:#fff"></div>
<svg class="a" style="left:63.5px;top:44.5px" width="6" height="7" viewBox="0 0 6 7"><rect x="0.5" y="0.5" width="5" height="6" fill="#f2c94c"/><rect x="0.5" y="0.5" width="2.5" height="1" fill="#e0a92e"/></svg>
<div class="t" style="left:73.5px;top:45px;font-size:6px;color:#8a8a8a">&#x00AB;</div>
<div class="t" style="left:81px;top:44.7px;font-size:6.4px;letter-spacing:-0.15px;color:#1e1e1e">New Volume (E:)</div>
<svg class="a" style="left:130.8px;top:46px" width="3" height="5" viewBox="0 0 3 5"><path d="M0.5,0.5 L2.5,2.5 L0.5,4.5" fill="none" stroke="#555" stroke-width="0.7"/></svg>
<div class="t" style="left:137.5px;top:45px;font-size:6.3px;color:#1e1e1e">aftereffects work</div>
<svg class="a" style="left:189.3px;top:46px" width="3" height="5" viewBox="0 0 3 5"><path d="M0.5,0.5 L2.5,2.5 L0.5,4.5" fill="none" stroke="#555" stroke-width="0.7"/></svg>
<div class="t" style="left:194px;top:45px;font-size:6.3px;color:#1e1e1e">jpeg seq</div>
<svg class="a" style="left:223.8px;top:46px" width="3" height="5" viewBox="0 0 3 5"><path d="M0.5,0.5 L2.5,2.5 L0.5,4.5" fill="none" stroke="#777" stroke-width="0.7"/></svg>
<svg class="a" style="left:265px;top:47px" width="5" height="3" viewBox="0 0 5 3"><path d="M0.5,0.5 L2.5,2.5 L4.5,0.5" fill="none" stroke="#555" stroke-width="0.8"/></svg>
<div class="a" style="left:271.5px;top:43px;width:1px;height:10px;background:#e8e8e8"></div>
<svg class="a" style="left:274px;top:44.5px" width="7" height="7" viewBox="0 0 7 7"><path d="M5.8,2.3 A2.6,2.6 0 1 0 6.1,4" fill="none" stroke="#666" stroke-width="0.8"/><path d="M4.2,0.6 L6,2.4 L6.3,0.3" fill="none" stroke="#666" stroke-width="0.7"/></svg>
<!-- search -->
<div class="a" style="left:287.5px;top:42px;width:105px;height:11.5px;border:1px solid #e3e3e3;background:#fff"></div>
<div class="t" style="left:291px;top:45px;font-size:6px;color:#7a7a7a">Search jpeg seq</div>
<svg class="a" style="left:381px;top:44.5px" width="8" height="8" viewBox="0 0 8 8"><circle cx="5" cy="3" r="2" fill="none" stroke="#666" stroke-width="1"/><line x1="3.6" y1="4.4" x2="1" y2="7" stroke="#666" stroke-width="1.2"/></svg>
<!-- toolbar band -->
<div class="a" style="left:5px;top:57.5px;width:392px;height:15.5px;background:#f3f5f7"></div>
<div class="t" style="left:14.4px;top:62.5px;font-size:6.1px;color:#4a5568">Organize</div>
<div class="t" style="left:41.5px;top:63px;font-size:4.5px;color:#4a5568">&#x25BC;</div>
<div class="t" style="left:60px;top:62.5px;font-size:6.1px;color:#4a5568">New folder</div>
<svg class="a" style="left:349px;top:62px" width="8" height="7" viewBox="0 0 8 7"><rect x="0" y="0" width="1.5" height="7" fill="#aab"/><rect x="2.5" y="0.5" width="5" height="1" fill="#aab"/><rect x="2.5" y="3" width="5" height="1" fill="#aab"/><rect x="2.5" y="5.5" width="5" height="1" fill="#aab"/></svg>
<div class="t" style="left:362px;top:63px;font-size:4.5px;color:#444">&#x25BC;</div>
<div class="a" style="left:381px;top:60.6px;width:9px;height:9px;border-radius:50%;background:#1c6fc4"></div>
<div class="t" style="left:383.5px;top:61.8px;font-size:7px;color:#fff;font-weight:bold">?</div>
<!-- nav pane -->
<div class="a" style="left:5px;top:186px;width:73px;height:11.5px;background:#d9d9d9"></div>
<div class="a" style="left:78px;top:73px;width:8px;height:132px;background:#f0f0f0"></div>
<svg class="a" style="left:80px;top:76.5px" width="5" height="3" viewBox="0 0 5 3"><path d="M0.5,2.5 L2.5,0.5 L4.5,2.5" fill="none" stroke="#606060" stroke-width="0.8"/></svg>
<div class="a" style="left:79px;top:147px;width:6px;height:40px;background:#cdcdcd"></div>
<svg class="a" style="left:79.5px;top:199px" width="5" height="3" viewBox="0 0 5 3"><path d="M0.5,0.5 L2.5,2.5 L4.5,0.5" fill="none" stroke="#606060" stroke-width="0.8"/></svg>
<svg class="a" style="left:22.5px;top:76.5px" width="8" height="8" viewBox="0 0 8 8"><path d="M1,2 L4,0.5 L7,2 L7,6 L4,7.5 L1,6 Z" fill="#3ba7e6"/><path d="M4,3.2 L7,2 L7,6 L4,7.5 Z" fill="#1a6fb8"/><path d="M1,2 L4,3.2 L4,7.5 L1,6 Z" fill="#7cd0f5"/></svg>
<div class="t" style="left:32.5px;top:76.7px;font-size:6.1px;color:#1e1e1e">3D Objects</div>
<svg class="a" style="left:22.5px;top:89px" width="8" height="7" viewBox="0 0 8 7"><rect x="0" y="0.5" width="7.5" height="5" fill="#1f8be0"/><rect x="0" y="5.5" width="7.5" height="1" fill="#0f5fa8"/></svg>
<div class="t" style="left:32.5px;top:89.2px;font-size:6.1px;color:#1e1e1e">Desktop</div>
<svg class="a" style="left:23px;top:101px" width="7" height="8" viewBox="0 0 7 8"><path d="M0.5,0.5 L4.5,0.5 L6.5,2.5 L6.5,7.5 L0.5,7.5 Z" fill="#f4f6f8" stroke="#9aa6b4" stroke-width="0.8"/><line x1="1.8" y1="3.5" x2="5" y2="3.5" stroke="#9aa6b4" stroke-width="0.6"/><line x1="1.8" y1="5" x2="5" y2="5" stroke="#9aa6b4" stroke-width="0.6"/></svg>
<div class="t" style="left:32.5px;top:101.7px;font-size:6.1px;color:#1e1e1e">Documents</div>
<svg class="a" style="left:22.5px;top:113.5px" width="8" height="8" viewBox="0 0 8 8"><rect x="2.8" y="0" width="2.4" height="4" fill="#2a7bd0"/><path d="M0.5,3.5 L7.5,3.5 L4,7.5 Z" fill="#2a7bd0"/></svg>
<div class="t" style="left:32.5px;top:113.9px;font-size:6.1px;color:#1e1e1e">Downloads</div>
<svg class="a" style="left:23px;top:126px" width="7" height="8" viewBox="0 0 7 8"><line x1="4.2" y1="0.5" x2="4.2" y2="6" stroke="#2a7bd0" stroke-width="0.9"/><ellipse cx="2.8" cy="6.2" rx="1.7" ry="1.3" fill="#2a7bd0"/><path d="M4.2,0.5 L6,2" stroke="#2a7bd0" stroke-width="0.8"/></svg>
<div class="t" style="left:32.5px;top:126.4px;font-size:6.1px;color:#1e1e1e">Music</div>
<svg class="a" style="left:22.5px;top:139px" width="8" height="7" viewBox="0 0 8 7"><rect x="0" y="0.5" width="8" height="6" fill="#dde6ee"/><rect x="0" y="0.5" width="8" height="1.2" fill="#556b82"/><path d="M0,6.5 L3,3.5 L5,5 L8,3 L8,6.5 Z" fill="#5f7a96"/></svg>
<div class="t" style="left:32.5px;top:138.7px;font-size:6.1px;color:#1e1e1e">Pictures</div>
<svg class="a" style="left:22.5px;top:150.5px" width="8" height="8" viewBox="0 0 8 8"><rect x="0.5" y="0.3" width="6.5" height="7.4" fill="#4d5864"/><rect x="1.5" y="1.3" width="4.5" height="2.5" fill="#707c88"/><rect x="1.5" y="4.3" width="4.5" height="2.5" fill="#707c88"/></svg>
<div class="t" style="left:32.5px;top:151.2px;font-size:6.1px;color:#1e1e1e">Videos</div>
<svg class="a" style="left:22px;top:163px" width="9" height="8" viewBox="0 0 9 8"><rect x="1" y="0.5" width="3" height="3" fill="#2ba5a0"/><path d="M0.5,6 L8.5,6 L7.5,7.5 L1,7.5 Z" fill="#8a8f94"/><rect x="1" y="4" width="1" height="2" fill="#2ba5a0"/></svg>
<div class="t" style="left:32.5px;top:163.7px;font-size:6.1px;color:#1e1e1e">Windows (C:)</div>
<svg class="a" style="left:22px;top:176.5px" width="9" height="7" viewBox="0 0 9 7"><path d="M0.5,4.5 L8.5,4.5 L7.5,6.5 L1.2,6.5 Z" fill="#8a8f94"/><rect x="1.5" y="5" width="5" height="0.6" fill="#eee"/></svg>
<div class="t" style="left:32.5px;top:176.2px;font-size:6.1px;color:#1e1e1e">DATA (D:)</div>
<svg class="a" style="left:22px;top:189px" width="9" height="7" viewBox="0 0 9 7"><path d="M0.5,4.5 L8.5,4.5 L7.5,6.5 L1.2,6.5 Z" fill="#7d8287"/><rect x="1.5" y="5" width="5" height="0.6" fill="#ddd"/></svg>
<div class="t" style="left:32.5px;top:188.7px;font-size:6.1px;color:#1e1e1e">New Volume (E:)</div>
<svg class="a" style="left:22px;top:201.3px" width="9" height="7" viewBox="0 0 9 7"><path d="M0.5,4.5 L8.5,4.5 L7.5,6.5 L1.2,6.5 Z" fill="#8a8f94"/></svg>
<div class="t" style="left:32.5px;top:201.0px;font-size:6.1px;color:#1e1e1e">New Volume (F:)</div>
<div class="a" style="left:5px;top:205px;width:393px;height:92px;background:#f0f0f0"></div>

<div class="t" style="left:97px;top:77px;font-size:6.1px;color:#6d7a8c">Name</div>
<svg class="a" style="left:160.5px;top:73.5px" width="5" height="3" viewBox="0 0 5 3"><path d="M0.5,2.5 L2.5,0.5 L4.5,2.5" fill="none" stroke="#999" stroke-width="0.7"/></svg>
<div class="a" style="left:230px;top:74px;width:1px;height:13px;background:#e5e5e5"></div>
<div class="t" style="left:233px;top:77px;font-size:6.1px;color:#6d7a8c">Date modified</div>
<div class="a" style="left:292.5px;top:74px;width:1px;height:13px;background:#e5e5e5"></div>
<div class="t" style="left:295.7px;top:77px;font-size:6.1px;color:#6d7a8c">Type</div>
<div class="a" style="left:354.5px;top:74px;width:1px;height:13px;background:#e5e5e5"></div>
<div class="t" style="left:358px;top:77px;font-size:6.1px;color:#6d7a8c">Size</div>
<div class="a" style="left:99.5px;top:93.0px;width:4.5px;height:6px;background:#f6d06a"></div>
<div class="t" style="left:108px;top:92.7px;font-size:6.1px;color:#1e1e1e">effect</div>
<div class="t" style="left:233px;top:93.4px;font-size:5.9px;color:#6d6d6d">28-10-2019 21:52</div>
<div class="t" style="left:295.7px;top:92.7px;font-size:6px;color:#6d6d6d">File folder</div>
<div class="a" style="left:99.5px;top:104.5px;width:4.5px;height:6px;background:#f6d06a"></div>
<div class="t" style="left:108px;top:104.2px;font-size:6.1px;color:#1e1e1e">cst</div>
<div class="t" style="left:233px;top:104.9px;font-size:5.9px;color:#6d6d6d">28-10-2019 22:11</div>
<div class="t" style="left:295.7px;top:104.2px;font-size:6px;color:#6d6d6d">File folder</div>
<div class="a" style="left:99.5px;top:115.7px;width:4.5px;height:6px;background:#f6d06a"></div>
<div class="t" style="left:108px;top:115.4px;font-size:6.1px;color:#1e1e1e">Summ-1</div>
<div class="t" style="left:233px;top:116.1px;font-size:5.9px;color:#6d6d6d">03-12-2019 05:33</div>
<div class="t" style="left:295.7px;top:115.4px;font-size:6px;color:#6d6d6d">File folder</div>
<div class="a" style="left:99.5px;top:127.0px;width:4.5px;height:6px;background:#f6d06a"></div>
<div class="t" style="left:108px;top:126.7px;font-size:6.1px;color:#1e1e1e">Winter-1</div>
<div class="t" style="left:233px;top:127.4px;font-size:5.9px;color:#6d6d6d">03-12-2019 05:36</div>
<div class="t" style="left:295.7px;top:126.7px;font-size:6px;color:#6d6d6d">File folder</div>
<div class="a" style="left:99.5px;top:138.2px;width:4.5px;height:6px;background:#f6d06a"></div>
<div class="t" style="left:108px;top:137.9px;font-size:6.1px;color:#1e1e1e">y2mate.com - goku_vs_naruto_fight_3d_a...</div>
<div class="t" style="left:233px;top:138.6px;font-size:5.9px;color:#6d6d6d">28-10-2019 21:52</div>
<div class="t" style="left:295.7px;top:137.9px;font-size:6px;color:#6d6d6d">File folder</div>

<!-- h scrollbar -->
<div class="a" style="left:86px;top:197px;width:312px;height:8px;background:#f0f0f0"></div>
<svg class="a" style="left:91px;top:199px" width="3" height="5" viewBox="0 0 3 5"><path d="M2.5,0.5 L0.5,2.5 L2.5,4.5" fill="none" stroke="#606060" stroke-width="0.8"/></svg>
<div class="a" style="left:97.5px;top:198px;width:287.5px;height:6px;background:#cdcdcd"></div>
<svg class="a" style="left:391.5px;top:199px" width="3" height="5" viewBox="0 0 3 5"><path d="M0.5,0.5 L2.5,2.5 L0.5,4.5" fill="none" stroke="#606060" stroke-width="0.8"/></svg>
<!-- bottom -->
<div class="t" style="left:40px;top:214px;font-size:6.1px;color:#1e1e1e">File name:</div>
<div class="a" style="left:70px;top:211.5px;width:324.5px;height:11px;border:1px solid #9ec2e6;background:#fff"></div>
<div class="a" style="left:73px;top:213px;width:50px;height:8px;background:#0078d7"></div>
<div class="t" style="left:73.5px;top:214px;font-size:6.1px;color:#fff">Winter-1_[#####]</div>
<svg class="a" style="left:389px;top:216px" width="5" height="3" viewBox="0 0 5 3"><path d="M0.5,0.5 L2.5,2.5 L4.5,0.5" fill="none" stroke="#555" stroke-width="0.8"/></svg>
<div class="t" style="left:33px;top:227px;font-size:6.1px;color:#1e1e1e">Save as type:</div>
<div class="a" style="left:70px;top:224.5px;width:325px;height:11px;border:1px solid #dadada;background:#e5e5e5"></div>
<div class="t" style="left:72.5px;top:227px;font-size:6.1px;color:#1e1e1e">JPEG (*.jpg)</div>
<svg class="a" style="left:389px;top:229px" width="5" height="3" viewBox="0 0 5 3"><path d="M0.5,0.5 L2.5,2.5 L4.5,0.5" fill="none" stroke="#555" stroke-width="0.8"/></svg>
<svg class="a" style="left:83px;top:243px" width="8" height="8" viewBox="0 0 8 8"><rect x="0.5" y="0.5" width="7" height="7" fill="#fff" stroke="#555" stroke-width="0.8"/><path d="M1.7,4.2 L3.2,5.8 L6.3,2" fill="none" stroke="#333" stroke-width="0.8"/></svg>
<div class="t" style="left:92px;top:242.5px;font-size:6.1px;color:#2a6db5">Save in subfolder</div>
<div class="a" style="left:83px;top:253px;width:71px;height:12.5px;border:1px solid #b5b5b5;background:#fff"></div>
<div class="t" style="left:86px;top:256px;font-size:6.1px;color:#1e1e1e">Winter-1</div>
<svg class="a" style="left:9.5px;top:284px" width="5" height="3" viewBox="0 0 5 3"><path d="M0.5,2.5 L2.5,0.5 L4.5,2.5" fill="none" stroke="#333" stroke-width="0.8"/></svg>
<div class="t" style="left:19px;top:282.5px;font-size:6.1px;color:#1e1e1e">Hide Folders</div>
<div class="a" style="left:292px;top:277px;width:45px;height:13.7px;border:1px solid #84acd4;background:#cde4f7"></div>
<div class="t" style="left:307px;top:280.7px;font-size:6.1px;color:#1e1e1e">Save</div>
<div class="a" style="left:344px;top:277px;width:44.6px;height:13.7px;border:1px solid #cfcfcf;background:#e1e1e1"></div>
<div class="t" style="left:356.5px;top:280.7px;font-size:6.1px;color:#1e1e1e">Cancel</div>
<svg class="a" style="left:308px;top:278px" width="8" height="11" viewBox="308 278 8 11"><path d="M309.6,278.8 L309.6,286.6 L311.3,285 L312.6,287.8 L313.8,287.2 L312.6,284.5 L314.9,284.5 Z" fill="#fff" stroke="#1a1a1a" stroke-width="0.6"/></svg>
<svg class="a" style="left:392px;top:291.5px" width="5" height="5" viewBox="0 0 5 5"><g fill="#a0a0a0"><rect x="3.5" y="0.5" width="1" height="1"/><rect x="2" y="2" width="1" height="1"/><rect x="3.5" y="2" width="1" height="1"/><rect x="0.5" y="3.5" width="1" height="1"/><rect x="2" y="3.5" width="1" height="1"/><rect x="3.5" y="3.5" width="1" height="1"/></g></svg>

</body></html>
